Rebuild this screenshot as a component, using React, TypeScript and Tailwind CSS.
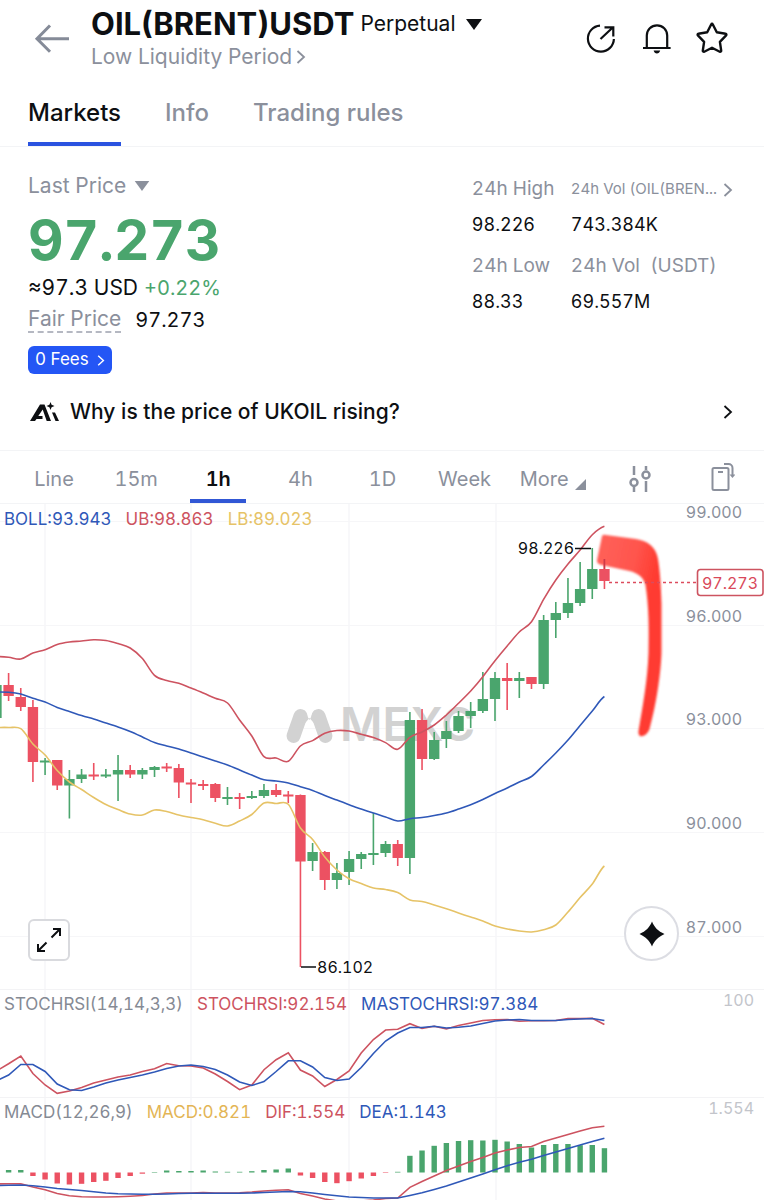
import { useState } from "react";

const INK = "#0d0f12";
const GREEN = "#4aa56d";
const RED = "#ec5162";
const UPPER = "#cd5360";
const MIDDLE = "#2f58b8";
const LOWER = "#e6c367";

const PITCH = 12.16;
const xAt = (i: number) => 8.6 + i * PITCH;

// [wick top, body top, body bottom, wick bottom, rising]
type Candle = [number, number, number, number, 0 | 1];

const candles: Candle[] = [
  [684, 685, 718, 719, 1],
  [673, 685, 696, 701, 0],
  [688, 697, 707, 711, 0],
  [700, 707, 762, 782, 0],
  [758, 760.5, 762.5, 775, 1],
  [760, 760, 785.5, 790, 0],
  [770, 779, 785.5, 818.5, 1],
  [769, 774.5, 779, 783, 1],
  [763, 774.5, 776.5, 780, 0],
  [769, 774.5, 776.5, 778, 1],
  [755, 770, 774.5, 801, 1],
  [765, 770, 774.5, 778, 0],
  [768, 770, 774.5, 779, 1],
  [766, 767, 770, 777, 1],
  [763, 766.5, 768.5, 772, 0],
  [764, 768, 782.5, 798, 0],
  [779, 782.5, 784.5, 803, 0],
  [780, 784, 786, 790, 0],
  [783, 784, 798, 802, 0],
  [787, 797, 799, 805, 1],
  [793, 797, 799, 809, 0],
  [791, 796, 798, 799, 1],
  [784, 790, 796, 798, 1],
  [784, 790, 795, 797, 0],
  [791, 794.5, 796.5, 803, 0],
  [794.5, 795, 861.5, 967, 0],
  [843, 852, 861, 871, 1],
  [851, 852, 880, 890, 0],
  [863, 873, 880, 889, 1],
  [851, 859, 872, 885, 1],
  [852, 854, 859, 869, 1],
  [813, 853, 855, 865, 1],
  [841, 844, 853, 857, 1],
  [840, 844, 858, 866, 0],
  [712, 720, 858, 874, 1],
  [709, 720, 759, 770, 0],
  [732, 740, 759, 760, 1],
  [721, 731, 739, 748, 1],
  [711, 716, 731, 733, 1],
  [702, 711, 716, 728, 1],
  [672, 699, 711, 713, 1],
  [672, 678, 699, 721, 1],
  [663, 678, 681, 710, 0],
  [672, 678, 681, 698, 1],
  [677, 677, 684, 689, 0],
  [615, 620, 684, 689, 1],
  [602, 613, 620, 638, 1],
  [578, 603, 613, 618, 1],
  [562, 589, 603, 606, 1],
  [548, 569, 589, 599, 1],
  [559, 569, 581, 589, 0],
];

const upperBand = [
  656.5, 657.3, 659, 653, 649.7, 644.5, 642, 641, 639.7, 640.5, 643.6, 648,
  658.5, 675.3, 680.6, 683.3, 688, 693, 698.3, 703, 720, 736, 756.7, 758, 761.3,
  746, 740.6, 733.3, 730.5, 731, 734.3, 737.5, 742.6, 749.3, 737.3, 732, 725,
  715, 703.3, 691, 676.7, 660.7, 646, 632, 621.7, 599.3, 580, 564, 550, 534.7,
  526.3,
];

const middleBand = [
  692, 692.3, 694, 698.3, 702, 707.5, 711.5, 715.5, 719, 723, 727, 731.5, 737,
  742.6, 746, 749, 753, 757, 761, 765, 770, 775, 779.7, 781, 783, 786.7, 790.5,
  795.5, 800, 804.7, 809, 813, 817, 821, 818.7, 817.5, 815.5, 813, 809, 804.7,
  799.5, 793.5, 788, 782, 776.5, 765, 753, 740, 725.5, 711, 696.5,
];

const lowerBand = [
  727.5, 727.5, 728.7, 744, 755, 770.5, 782, 789.5, 797.5, 804.5, 809.5, 814,
  815, 810, 811.5, 815, 817.5, 819.7, 823.3, 826, 821, 814.5, 803, 803.5, 804.3,
  828, 839.5, 857, 870, 878.7, 883.5, 888, 889.5, 892.6, 900, 901.5, 905, 908.7,
  913, 917, 921, 926, 929, 931, 932, 929.7, 925, 912, 897.5, 884, 866,
];

const stochRsi = [
  1071, 1063.7, 1056, 1073.5, 1085, 1093.3, 1091, 1087.5, 1083, 1080, 1077,
  1075, 1071.5, 1068.7, 1063.5, 1065.7, 1066, 1068, 1074, 1081.5, 1089.7, 1085,
  1069.7, 1059.7, 1052.7, 1070, 1076, 1086.5, 1079.5, 1071, 1053, 1039.5, 1030,
  1029.3, 1023.7, 1028.5, 1026.3, 1029, 1025.5, 1023, 1020.5, 1019.7, 1019.5,
  1021.3, 1020.7, 1020.7, 1020.5, 1018.5, 1018.5, 1018.3, 1024.5,
];

const stochMa = [
  1081, 1075, 1064.5, 1064.5, 1071.5, 1084, 1089.7, 1090.5, 1087, 1083, 1080,
  1077.5, 1075, 1072, 1068.5, 1066, 1065, 1066.5, 1069.5, 1075, 1082, 1085.5,
  1081.5, 1071.5, 1060.8, 1060.8, 1067, 1077.5, 1080.5, 1079, 1067.5, 1053.5,
  1041, 1033, 1027.5, 1027.5, 1026.3, 1028, 1027.3, 1026, 1023.5, 1021, 1020,
  1019.5, 1020.5, 1020.5, 1020.5, 1019.5, 1019, 1018.5, 1020.5,
];

const macdBars = [
  2.5, 2.5, 2.5, -3.5, -7, -11, -12, -11.3, -9.5, -8.3, -5.5, -3.5, -1.2, 0.5,
  2, 1.5, 1.5, 2, 1, 0.7, 0.7, 1.3, 2.5, 3, 4, -3, -5.5, -9.5, -10.7, -8.7, -6,
  -3.5, -0.5, 0.7, 16.7, 22, 26.7, 29.5, 31.5, 32.3, 32, 32.7, 31, 28.5, 25,
  27.5, 28.5, 28.5, 27.3, 27.5, 24.3,
];

const dif = [
  1184, 1183.7, 1183.7, 1187, 1189.8, 1193.5, 1195.7, 1196.7, 1197, 1197,
  1196.7, 1196.2, 1195.5, 1194, 1193, 1193, 1193, 1192.5, 1193, 1193, 1192.7,
  1192, 1191, 1190.3, 1189.7, 1193.5, 1196, 1199, 1201, 1201.5, 1201, 1200,
  1198.5, 1198, 1187.3, 1181.5, 1176, 1170.5, 1166, 1161.5, 1157.5, 1153, 1150,
  1147.5, 1146.5, 1141.5, 1138, 1134.5, 1131, 1127.7, 1126.3,
];

const dea = [
  1185.5, 1185.3, 1185, 1185.7, 1187, 1188.5, 1189.5, 1190.5, 1191.7, 1193,
  1193.7, 1194, 1194.2, 1194.3, 1194, 1193.5, 1193.3, 1193.3, 1193.3, 1193.3,
  1193.3, 1193, 1192.5, 1192, 1191.5, 1191.8, 1193, 1194.5, 1195.8, 1197,
  1197.5, 1198, 1198, 1198, 1195.5, 1192.8, 1189.5, 1186, 1182, 1178, 1174,
  1169.7, 1165.7, 1162.3, 1159.3, 1155.5, 1152, 1148.5, 1145, 1141.5, 1138.3,
];

const gridX = [45, 191, 349, 496];

const priceTicks = [
  { label: "99.000", y: 521.5 },
  { label: "96.000", y: 625.5 },
  { label: "93.000", y: 728.5 },
  { label: "90.000", y: 832.5 },
  { label: "87.000", y: 936.5 },
];

function linePath(values: number[]) {
  return values
    .map((y, i) => `${i === 0 ? "M" : "L"}${xAt(i - 1).toFixed(1)} ${y}`)
    .join(" ");
}

function curvePath(values: number[]) {
  let d = `M${xAt(-1).toFixed(1)} ${values[0]}`;
  for (let i = 0; i < values.length - 1; i++) {
    const prev = values[i - 1] ?? values[i];
    const next = values[i + 1];
    const after = values[i + 2] ?? next;
    const x0 = xAt(i - 1);
    const c1 = values[i] + (next - prev) / 6;
    const c2 = next - (after - values[i]) / 6;
    d += ` C${(x0 + PITCH / 3).toFixed(1)} ${c1.toFixed(1)} ${(
      x0 +
      (PITCH * 2) / 3
    ).toFixed(1)} ${c2.toFixed(1)} ${(x0 + PITCH).toFixed(1)} ${next}`;
  }
  return d;
}

function GridColumns({ top, bottom }: { top: number; bottom: number }) {
  return (
    <g stroke="#f6f6f8" strokeWidth={1.5}>
      {gridX.map((x) => (
        <line key={x} x1={x} x2={x} y1={top} y2={bottom} />
      ))}
    </g>
  );
}

function Chevron({ className }: { className?: string }) {
  return (
    <svg viewBox="0 0 10 16" fill="none" className={className} aria-hidden>
      <path d="M1.5 2 8 8l-6.5 6" stroke="currentColor" strokeWidth={1.8} />
    </svg>
  );
}

function Caret({ className }: { className?: string }) {
  return (
    <svg viewBox="0 0 16 11" className={className} aria-hidden>
      <path d="M0 0h16L8 11z" fill="currentColor" />
    </svg>
  );
}

function Header() {
  return (
    <header className="flex h-[78px] items-start pl-[34px] pr-[34px]">
      <button type="button" aria-label="Back" className="mt-6 text-[#858b98]">
        <svg width="36" height="30" viewBox="0 0 36 30" fill="none">
          <path
            d="M35 14.8H3M16 1.5 3 14.8l13 13"
            stroke="currentColor"
            strokeWidth={3}
          />
        </svg>
      </button>
      <div className="ml-[21px] flex-1 pt-2">
        <div className="flex h-8 items-center gap-1.5 whitespace-nowrap">
          <h1 className="text-[31px] font-bold leading-8">OIL(BRENT)USDT</h1>
          <button type="button" className="flex items-center gap-2.5 text-[21px]">
            Perpetual
            <Caret className="h-[11px] w-4" />
          </button>
        </div>
        <button
          type="button"
          className="mt-px flex h-8 items-center gap-1 text-[21px] text-[#8b909c]"
        >
          Low Liquidity Period
          <Chevron className="h-4 w-2.5" />
        </button>
      </div>
      <div className="mt-5 flex items-center gap-5">
        <button type="button" aria-label="Share">
          <svg width="36" height="36" viewBox="0 0 36 36" fill="none" stroke="currentColor" strokeWidth={2.2}>
            <path d="M18 5.6A13 13 0 1 0 31.9 19M18.5 19 31 7.2M22.5 7.4h8.8v9" />
          </svg>
        </button>
        <button type="button" aria-label="Price alerts">
          <svg width="36" height="36" viewBox="0 0 36 36" fill="none" stroke="currentColor" strokeWidth={2.2}>
            <path d="M8.8 28V15.500a10 10 0 0 1 20.400 0V28M5 28h27.600" />
            <path d="M15.600 30.600h6.600c-.5 2-1.700 2.900-3.300 2.900s-2.800-.9-3.300-2.900z" fill="currentColor" stroke="none" />
          </svg>
        </button>
        <button type="button" aria-label="Add to favorites">
          <svg width="36" height="36" viewBox="0 0 36 36" fill="none" stroke="currentColor" strokeWidth={2.4} strokeLinejoin="round">
            <path d="M17.3 4.300c.3-.7 1.100-.7 1.400 0l4.100 8 8.800 1.400c.8.1 1.100 1 .5 1.600l-6.200 6.500 1.300 8.900c.1.800-.7 1.300-1.400 1L18 27.800l-7.800 3.900c-.7.3-1.500-.2-1.400-1l1.300-8.900-6.200-6.500c-.6-.6-.3-1.500.5-1.600l8.800-1.400z" />
          </svg>
        </button>
      </div>
    </header>
  );
}

const tabs = ["Markets", "Info", "Trading rules"];

function Tabs() {
  const [active, setActive] = useState("Markets");
  return (
    <nav className="flex h-[69px] gap-11 border-b border-[#f3f4f6] pl-7 text-2xl font-medium">
      {tabs.map((tab) => (
        <button
          key={tab}
          type="button"
          onClick={() => setActive(tab)}
          className={
            tab === active
              ? "border-b-4 border-[#2a53e0] pt-1.5"
              : "border-b-4 border-transparent pt-1.5 text-[#8b909c]"
          }
        >
          {tab}
        </button>
      ))}
    </nav>
  );
}

function Stat({ label, value, more }: { label: string; value: string; more?: boolean }) {
  return (
    <div>
      <dt className="flex h-[35px] items-center whitespace-pre text-[19px] text-[#8b909c]">
        {more ? (
          <button type="button" className="flex items-center gap-1.5 text-[15px]">
            {label}
            <Chevron className="h-4 w-2.5" />
          </button>
        ) : (
          label
        )}
      </dt>
      <dd className="flex h-[35px] items-center text-lg">{value}</dd>
    </div>
  );
}

function Summary() {
  return (
    <section className="flex justify-between pl-7 pr-[31px] pt-[25px]">
      <div className="text-[21px]">
        <button type="button" className="flex h-7 items-center gap-2 text-[#8b909c]">
          Last Price
          <Caret className="h-2.5 w-4" />
        </button>
        <p className="mt-3 text-[55px] font-bold leading-[56px] text-[#4aa56d]">97.273</p>
        <p className="mt-1.5 flex h-7 items-center gap-1.5">
          ≈97.3 USD <span className="text-xl text-[#4aa56d]">+0.22%</span>
        </p>
        <p className="mt-1 flex h-7 items-center gap-3.5">
          <span className="border-b-2 border-dashed border-[#b5b8c2] leading-6 text-[#8b909c]">
            Fair Price
          </span>
          <span className="text-xl">97.273</span>
        </p>
        <button
          type="button"
          className="mt-3 flex h-7 items-center gap-2 rounded-md bg-[#2456f5] px-[7px] text-[17px] text-white"
        >
          0 Fees
          <Chevron className="h-[13px] w-2" />
        </button>
      </div>
      <dl className="grid h-fit grid-cols-[99px_auto] gap-y-[7px]">
        <Stat label="24h High" value="98.226" />
        <Stat label="24h Vol (OIL(BREN..." value="743.384K" more />
        <Stat label="24h Low" value="88.33" />
        <Stat label="24h Vol  (USDT)" value="69.557M" />
      </dl>
    </section>
  );
}

function Question() {
  return (
    <a
      href="#why"
      className="flex h-[77px] items-center border-b border-[#f3f4f6] pl-[30px] pr-[31px] text-[21px] font-medium"
    >
      <svg width="30" height="20" viewBox="0 0 30 20" className="mr-2.5" aria-hidden>
        <path
          d="M0 19 10 2.500h4.500L21 19h-4.300L12.700 7.500 8.300 14h4.200v3H6.500L5 19zM22 10.500h3L29 19h-3.500z"
          fill="currentColor"
        />
        <path d="M20.500 0l1.100 2.800 2.900 1.200-2.900 1.200-1.100 2.800-1.100-2.800L16.500 4l2.900-1.200z" fill="currentColor" />
      </svg>
      <span className="flex-1">Why is the price of UKOIL rising?</span>
      <Chevron className="h-4 w-2.5" />
    </a>
  );
}

const frames = ["Line", "15m", "1h", "4h", "1D", "Week"];

function Timeframes() {
  const [active, setActive] = useState("1h");
  return (
    <div className="grid h-[53px] grid-cols-[repeat(6,82fr)_94fr_82fr_82fr] border-b border-[#f3f4f6] pl-[13px] text-xl text-[#8b909c]">
      {frames.map((frame) => (
        <button
          key={frame}
          type="button"
          onClick={() => setActive(frame)}
          className={
            frame === active
              ? "mx-[13px] border-b-4 border-[#3157d5] pt-[7px] font-semibold text-[#0d0f12]"
              : "mx-[13px] border-b-4 border-transparent pt-[7px]"
          }
        >
          {frame}
        </button>
      ))}
      <button type="button" className="flex items-center justify-center gap-1.5 pt-[3px]">
        More
        <svg width="11" height="11" viewBox="0 0 11 11" className="mt-3" aria-hidden>
          <path d="M11 0v11H0z" fill="currentColor" />
        </svg>
      </button>
      <button type="button" aria-label="Indicators" className="flex items-center justify-center pt-[3px]">
        <svg width="24" height="28" viewBox="0 0 24 28" fill="none" stroke="currentColor" strokeWidth={2.5}>
          <path d="M5 1v9M5 21v6M17 1v4M17 16v11" />
          <circle cx="5" cy="17.5" r="3.5" />
          <circle cx="17" cy="10" r="3.5" />
        </svg>
      </button>
      <button type="button" aria-label="Rotate screen" className="flex items-center justify-center">
        <svg width="24" height="30" viewBox="0 0 24 30" fill="none" stroke="currentColor" strokeWidth={2}>
          <rect x="1.5" y="6" width="16" height="22" rx="1.5" />
          <path d="M7 10h5M13 2h4.500a4 4 0 0 1 4 4v8" />
          <path d="M18.500 12.500h6l-3 3.500z" fill="currentColor" stroke="none" />
        </svg>
      </button>
    </div>
  );
}

function PriceChart() {
  return (
    <section className="relative">
      <svg viewBox="0 504 764 485" className="block w-full overflow-visible" fontFamily="Inter, sans-serif">
        <GridColumns top={504} bottom={989} />
        {priceTicks.map((tick) => (
          <g key={tick.label}>
            <line x1={0} x2={764} y1={tick.y} y2={tick.y} stroke="#f6f6f8" />
            <text x={742} y={tick.y - 4} textAnchor="end" fontSize={16} fill="#8b909c">
              {tick.label}
            </text>
          </g>
        ))}

        <g stroke="#d2d2d2" strokeWidth={14} strokeLinecap="round">
          <path d="M293.5 736 300.5 716M318.5 716 325.5 736" fill="none" />
          <path d="M304 710l5.500 10 5-10 8 16h-6l-7-8-7 8z" fill="#d2d2d2" stroke="none" />
        </g>
        <text x={340} y={741} fontSize={46} fontWeight={600} fill="#d2d2d2">
          MEXC
        </text>

        <defs>
          <linearGradient id="marker" x1="0" y1="0" x2="1" y2="0.7">
            <stop offset="0" stopColor="#ff625a" />
            <stop offset="0.45" stopColor="#ff554d" />
            <stop offset="0.7" stopColor="#ff3b30" />
          </linearGradient>
          <filter id="soft" x="-10%" y="-10%" width="120%" height="120%">
            <feGaussianBlur stdDeviation="0.9" />
          </filter>
        </defs>
        <path
          d="M602 536q1-2 4-1l30 4c12 2 20 8 22 20 2 12 3 28 3.500 45v48c-.5 20-5 52-12 77-2 7-12 11-11 2 4-24 9-50 10-78 .5-25 .500-45-3-68-2-8-8-12-16-14l-28-6q-5-1-4.500-5z"
          fill="url(#marker)"
          filter="url(#soft)"
        />

        {candles.map(([high, top, bottom, low, rising], i) => {
          const color = rising ? GREEN : RED;
          const x = xAt(i - 1);
          return (
            <g key={i} fill={color}>
              <rect x={x - 0.8} y={high} width={1.6} height={low - high} />
              <rect x={x - 5.2} y={top} width={10.4} height={bottom - top} />
            </g>
          );
        })}
        <path d="M604.4 559v10" stroke="#cf3a45" strokeWidth={1.6} />

        <g fill="none" strokeWidth={1.6}>
          <path d={curvePath(lowerBand)} stroke={LOWER} />
          <path d={curvePath(middleBand)} stroke={MIDDLE} />
          <path d={curvePath(upperBand)} stroke={UPPER} />
          <path d="M609 582.5H697" stroke="#dc4b5d" strokeDasharray="3 3" />
        </g>

        <rect x={697.5} y={569.5} width={65.5} height={26} rx={3} fill="#fff" stroke="#cd5360" strokeWidth={1.6} />
        <text x={730} y={588.5} textAnchor="middle" fontSize={16} fill="#d9485a">
          97.273
        </text>

        <g fontSize={16} fill={INK}>
          <text x={574} y={554} textAnchor="end">
            98.226
          </text>
          <text x={317} y={973}>
            86.102
          </text>
          <path d="M575 548.5h16M301 967h15" stroke={INK} strokeWidth={1.4} />
        </g>
      </svg>

      <p className="absolute left-1 top-[5px] flex gap-3.5 text-[17px] leading-5">
        <span className="text-[#2f58b8]">BOLL:93.943</span>
        <span className="text-[#cd5360]">UB:98.863</span>
        <span className="text-[#e6c367]">LB:89.023</span>
      </p>

      <button
        type="button"
        aria-label="Full screen"
        className="absolute bottom-7 left-7 flex size-[42px] items-center justify-center rounded-md border-2 border-[#d9dade] bg-white"
      >
        <svg width="26" height="26" viewBox="0 0 26 26" fill="none" stroke="currentColor" strokeWidth={2}>
          <path d="M15.5 10.5 24 2M17 2h7v7M10.5 15.5 2 24M2 17v7h7" />
        </svg>
      </button>
      <button
        type="button"
        aria-label="Ask AI"
        className="absolute bottom-7 right-[85px] flex size-[55px] items-center justify-center rounded-full border-2 border-[#dcdde3] bg-white"
      >
        <svg width="26" height="26" viewBox="0 0 26 26" fill="currentColor">
          <path d="M13 .5c2.500 6 6 9.500 12.500 12.500-6.500 3-10 6.500-12.500 12.500C10.500 19.500 7 16 .5 13 7 10 10.500 6.500 13 .5z" />
        </svg>
      </button>
    </section>
  );
}

function StochChart() {
  return (
    <section className="relative">
      <svg viewBox="0 989 764 108" className="block w-full" fontFamily="Inter, sans-serif">
        <GridColumns top={989} bottom={1097} />
        <line x1={0} x2={764} y1={989.5} y2={989.5} stroke="#f3f3f5" />
        <text x={754} y={1006} textAnchor="end" fontSize={16} fill="#c3c5cb">
          100
        </text>
        <g fill="none" strokeWidth={1.6}>
          <path d={linePath(stochRsi)} stroke={UPPER} />
          <path d={linePath(stochMa)} stroke={MIDDLE} />
        </g>
      </svg>
      <p className="absolute left-1 top-[5px] flex gap-3.5 text-[17px] leading-5">
        <span className="text-[#858a94]">STOCHRSI(14,14,3,3)</span>
        <span className="text-[#cd5360]">STOCHRSI:92.154</span>
        <span className="text-[#2f58b8]">MASTOCHRSI:97.384</span>
      </p>
    </section>
  );
}

function MacdChart() {
  return (
    <section className="relative">
      <svg viewBox="0 1097 764 103" className="block w-full" fontFamily="Inter, sans-serif">
        <GridColumns top={1097} bottom={1200} />
        <line x1={0} x2={764} y1={1097.5} y2={1097.5} stroke="#f3f3f5" />
        <text x={754} y={1114} textAnchor="end" fontSize={16} fill="#c3c5cb">
          1.554
        </text>
        {macdBars.map((value, i) => (
          <rect
            key={i}
            x={xAt(i - 1) - 2.7}
            y={value > 0 ? 1172.5 - value : 1172.5}
            width={5.4}
            height={Math.abs(value)}
            fill={value > 0 ? GREEN : RED}
          />
        ))}
        <g fill="none" strokeWidth={1.6}>
          <path d={linePath(dif)} stroke={UPPER} />
          <path d={linePath(dea)} stroke={MIDDLE} />
        </g>
      </svg>
      <p className="absolute left-1 top-[5px] flex gap-3.5 text-[17px] leading-5">
        <span className="text-[#858a94]">MACD(12,26,9)</span>
        <span className="text-[#e3b555]">MACD:0.821</span>
        <span className="text-[#cd5360]">DIF:1.554</span>
        <span className="text-[#2f58b8]">DEA:1.143</span>
      </p>
    </section>
  );
}

export default function App() {
  return (
    <main className="bg-white font-[Inter,sans-serif] tabular-nums text-[#0d0f12]">
      <Header />
      <Tabs />
      <Summary />
      <Question />
      <Timeframes />
      <PriceChart />
      <StochChart />
      <MacdChart />
    </main>
  );
}
